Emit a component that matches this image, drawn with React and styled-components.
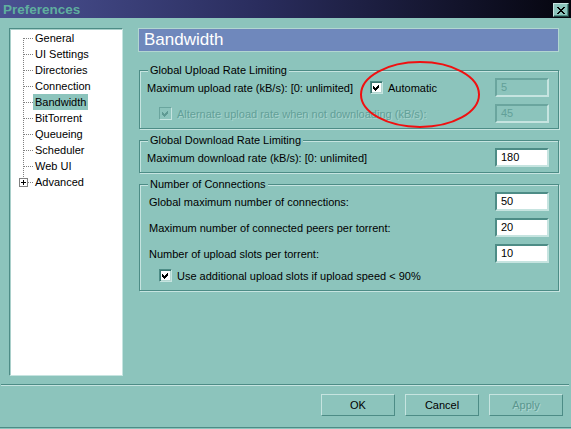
import React from "react";
import styled, { createGlobalStyle } from "styled-components";

const C = {
  bg: "#8cc4bc",
  dark: "#4d8c86",
  light: "#c6e4e0",
  disabled: "#62a098",
  header: "#6f88bc",
};

const Global = createGlobalStyle`
  html, body { margin: 0; padding: 0; background: ${C.bg}; }
  body { font-family: "Liberation Sans", Arial, sans-serif; font-size: 11px; color: #000; }
  * { box-sizing: border-box; }
`;

const Window = styled.div`
  position: relative;
  width: 571px;
  height: 428px;
  background: ${C.bg};
  display: flex;
  flex-direction: column;
  border-bottom: 1px solid ${C.dark};
  overflow: hidden;
`;

const TitleBar = styled.div`
  height: 18px;
  flex: none;
  display: flex;
  align-items: flex-start;
  justify-content: space-between;
  padding: 0 2px 0 3px;
  background: linear-gradient(to right, #4a5192, #2a2d5e 45%, #05050e);
`;

const Title = styled.span`
  font-weight: bold;
  font-size: 13.5px;
  line-height: 18px;
  margin-top: 1px;
  color: #5fae9f;
`;

const CloseButton = styled.button`
  width: 16px;
  height: 14px;
  margin-top: 3px;
  padding: 0;
  background: ${C.bg};
  border: 1px solid;
  border-color: ${C.light} #1e3e3a #1e3e3a ${C.light};
  box-shadow: inset -1px -1px 0 ${C.dark};
  display: flex;
  align-items: center;
  justify-content: center;
`;

const Body = styled.div`
  display: flex;
  gap: 15px;
  height: 366px;
  flex: none;
  padding: 10px 0 8px 9px;
`;

const Tree = styled.ul`
  width: 114px;
  height: 348px;
  margin: 0;
  padding: 1px 0 0 0;
  list-style: none;
  background: #fff;
  border: 1px solid;
  border-color: ${C.dark} ${C.light} ${C.light} ${C.dark};
  box-shadow: inset 1px 1px 0 #a9cfca;
`;

const TreeRow = styled.li`
  display: flex;
  align-items: center;
  height: 16px;
`;

const TreeLabel = styled.span`
  line-height: 16px;
  padding: 0 2px;
  background: ${(p) => (p.$selected ? C.bg : "transparent")};
`;

const Main = styled.div`
  width: 421px;
  display: flex;
  flex-direction: column;
`;

const Header = styled.div`
  height: 24px;
  border: 1px solid #b2d6d1;
  background: ${C.header};
  color: #fff;
  font-size: 17px;
  line-height: 22px;
  padding-left: 5px;
`;

const Group = styled.div`
  margin: ${(p) => p.$top}px 0 0 1px;
  width: 420px;
  border: 1px solid ${C.dark};
  box-shadow: inset 1px 1px 0 ${C.light}, 1px 1px 0 ${C.light};
  padding: 0 9px 5px 7px;
  display: flex;
  flex-direction: column;
`;

const Legend = styled.span`
  align-self: flex-start;
  margin: -7px 0 0 1px;
  padding: 0 2px;
  height: 13px;
  line-height: 13px;
  background: ${C.bg};
`;

const Row = styled.div`
  display: flex;
  align-items: center;
  height: 19px;
  margin-top: ${(p) => p.$gap}px;
  padding-left: ${(p) => p.$pad || 0}px;
`;

const Label = styled.span`
  color: ${(p) => (p.$disabled ? C.disabled : "#000")};
  text-shadow: ${(p) => (p.$disabled ? "1px 1px 0 rgba(206,232,228,0.45)" : "none")};
  width: ${(p) => (p.$w ? `${p.$w}px` : "auto")};
  flex: none;
  white-space: nowrap;
`;

const Box = styled.span`
  width: 13px;
  height: 13px;
  flex: none;
  display: flex;
  align-items: center;
  justify-content: center;
  margin-right: 5px;
  border: 1px solid;
  border-color: ${(p) => (p.$disabled ? "#6aa59e" : C.dark)} ${C.light} ${C.light}
    ${(p) => (p.$disabled ? "#6aa59e" : C.dark)};
  box-shadow: ${(p) =>
    p.$disabled ? "none" : "inset 1px 1px 0 #3c7670, inset -1px -1px 0 #b4d6d1"};
  background: ${(p) => (p.$disabled ? C.bg : "#fff")};
`;

const Field = styled.div`
  margin-left: auto;
  width: 54px;
  height: 19px;
  flex: none;
  border: 2px solid;
  border-color: ${(p) => (p.$disabled ? "#6aa59e" : C.dark)} ${C.light} ${C.light}
    ${(p) => (p.$disabled ? "#6aa59e" : C.dark)};
  background: ${(p) => (p.$disabled ? C.bg : "#fff")};
  color: ${(p) => (p.$disabled ? C.disabled : "#000")};
  padding-left: 4px;
  line-height: 15px;
`;

const Separator = styled.hr`
  margin: 0 2px 0 1px;
  height: 2px;
  border: 0;
  border-top: 1px solid ${C.dark};
  border-bottom: 1px solid ${C.light};
  flex: none;
`;

const Footer = styled.div`
  height: 41px;
  flex: none;
  display: flex;
  justify-content: flex-end;
  align-items: flex-start;
  gap: 10px;
  padding: 8px 8px 0 0;
`;

const Button = styled.button`
  width: 74px;
  height: 22px;
  padding: 0;
  font-family: "Liberation Sans", Arial, sans-serif;
  font-size: 11px;
  background: ${C.bg};
  color: ${(p) => (p.disabled ? "#5a978f" : "#000")};
  text-shadow: ${(p) => (p.disabled ? "1px 1px 0 rgba(206,232,228,0.5)" : "none")};
  border: 1px solid;
  border-color: ${C.light} ${C.dark} ${C.dark} ${C.light};
`;

const Annotation = styled.svg`
  position: absolute;
  left: 359px;
  top: 61px;
  pointer-events: none;
`;

const Check = ({ disabled }) => (
  <svg width="7" height="7" viewBox="0 0 7 7" shapeRendering="crispEdges">
    <polygon points="0,2 2,4 6,0 6,3 2,7 0,5" fill={disabled ? "#5f9a93" : "#000"} />
  </svg>
);

const Checkbox = ({ disabled }) => (
  <Box $disabled={disabled}>
    <Check disabled={disabled} />
  </Box>
);

const Connector = ({ first, last, plus }) => (
  <svg width="23" height="16" viewBox="0 0 23 16" style={{ flex: "none" }}>
    <g stroke="#808080" strokeWidth="1" strokeDasharray="1 1" shapeRendering="crispEdges">
      <line x1="13.5" y1={first ? 8 : 0} x2="13.5" y2={plus ? 4 : last ? 8 : 16} />
      <line x1={plus ? 18 : 14} y1="8.5" x2="23" y2="8.5" />
    </g>
    {plus && (
      <g shapeRendering="crispEdges">
        <rect x="9.5" y="4.5" width="8" height="8" fill="#fff" stroke="#808080" />
        <line x1="11" y1="8.5" x2="16" y2="8.5" stroke="#000" />
        <line x1="13.5" y1="6" x2="13.5" y2="11" stroke="#000" />
      </g>
    )}
  </svg>
);

const treeItems = [
  "General",
  "UI Settings",
  "Directories",
  "Connection",
  "Bandwidth",
  "BitTorrent",
  "Queueing",
  "Scheduler",
  "Web UI",
  "Advanced",
];

export default function App() {
  return (
    <>
      <Global />
      <Window>
        <TitleBar>
          <Title>Preferences</Title>
          <CloseButton aria-label="Close">
            <svg width="8" height="7" viewBox="0 0 8 7" shapeRendering="crispEdges">
              <path d="M0 0 L7 7 M1 0 L8 7 M7 0 L0 7 M8 0 L1 7" stroke="#000" strokeWidth="1" />
            </svg>
          </CloseButton>
        </TitleBar>
        <Body>
          <Tree>
            {treeItems.map((item, i) => (
              <TreeRow key={item}>
                <Connector
                  first={i === 0}
                  last={i === treeItems.length - 1}
                  plus={item === "Advanced"}
                />
                <TreeLabel $selected={item === "Bandwidth"}>{item}</TreeLabel>
              </TreeRow>
            ))}
          </Tree>
          <Main>
            <Header>Bandwidth</Header>
            <Group $top={18}>
              <Legend>Global Upload Rate Limiting</Legend>
              <Row $gap={1}>
                <Label $w={223}>Maximum upload rate (kB/s): [0: unlimited]</Label>
                <Checkbox />
                <Label>Automatic</Label>
                <Field $disabled>5</Field>
              </Row>
              <Row $gap={7} $pad={12}>
                <Checkbox disabled />
                <Label $disabled>Alternate upload rate when not downloading (kB/s):</Label>
                <Field $disabled>45</Field>
              </Row>
            </Group>
            <Group $top={11}>
              <Legend>Global Download Rate Limiting</Legend>
              <Row $gap={1}>
                <Label>Maximum download rate (kB/s): [0: unlimited]</Label>
                <Field>180</Field>
              </Row>
            </Group>
            <Group $top={11}>
              <Legend>Number of Connections</Legend>
              <Row $gap={1} $pad={2}>
                <Label>Global maximum number of connections:</Label>
                <Field>50</Field>
              </Row>
              <Row $gap={7} $pad={2}>
                <Label>Maximum number of connected peers per torrent:</Label>
                <Field>20</Field>
              </Row>
              <Row $gap={7} $pad={2}>
                <Label>Number of upload slots per torrent:</Label>
                <Field>10</Field>
              </Row>
              <Row $gap={3} $pad={12}>
                <Checkbox />
                <Label>Use additional upload slots if upload speed &lt; 90%</Label>
              </Row>
            </Group>
          </Main>
        </Body>
        <Separator />
        <Footer>
          <Button>OK</Button>
          <Button>Cancel</Button>
          <Button disabled>Apply</Button>
        </Footer>
        <Annotation width="122" height="68" viewBox="0 0 122 68">
          <ellipse cx="61" cy="33.5" rx="59" ry="32.5" fill="none" stroke="#f01010" strokeWidth="2" />
        </Annotation>
      </Window>
    </>
  );
}
